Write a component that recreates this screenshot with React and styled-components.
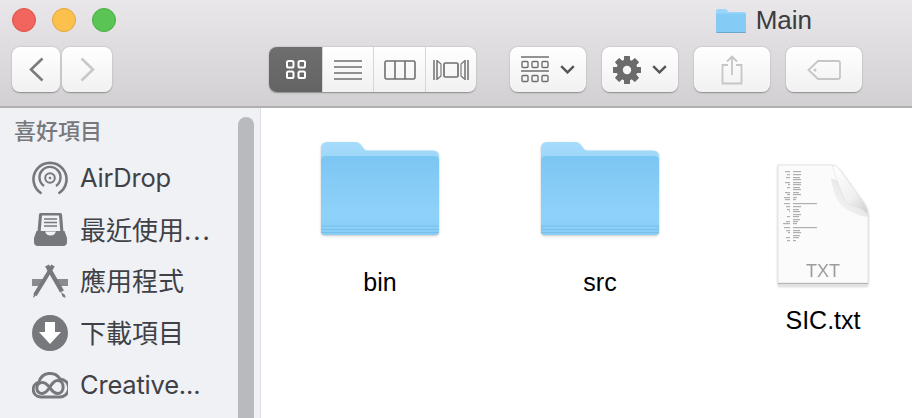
import React from 'react';
import styled, { createGlobalStyle } from 'styled-components';

const Global = createGlobalStyle`
  html, body { margin: 0; padding: 0; background: #fff; }
  body { width: 912px; height: 418px; overflow: hidden; }
`;

const Chev = ({ color = '#555' }) => (
  <svg width="15" height="9" viewBox="0 0 15 9" fill="none">
    <path d="M1.2 1.2 7.5 7.4 13.8 1.2" stroke={color} strokeWidth="2.4" />
  </svg>
);

const GridIcon = () => (
  <svg width="20" height="19" viewBox="0 0 20 19" fill="none" stroke="#fff" strokeWidth="2">
    <rect x="1" y="1" width="6.5" height="6.5" rx="1.6" />
    <rect x="12.5" y="1" width="6.5" height="6.5" rx="1.6" />
    <rect x="1" y="11.5" width="6.5" height="6.5" rx="1.6" />
    <rect x="12.5" y="11.5" width="6.5" height="6.5" rx="1.6" />
  </svg>
);

const ListIcon = () => (
  <svg width="28" height="20" viewBox="0 0 28 20" fill="none" stroke="#6f6f6f" strokeWidth="1.4">
    <path d="M0 1h28M0 7h28M0 13h28M0 19h28" />
  </svg>
);

const ColumnsIcon = () => (
  <svg width="32" height="20" viewBox="0 0 32 20" fill="none" stroke="#6f6f6f" strokeWidth="1.6">
    <rect x="1" y="1" width="30" height="18" rx="1.6" />
    <path d="M11 1v18M21 1v18" />
  </svg>
);

const CoverIcon = () => (
  <svg width="36" height="22" viewBox="0 0 36 22" fill="none" stroke="#6f6f6f" strokeWidth="1.5">
    <rect x="11" y="4" width="14" height="14" rx="1.4" strokeWidth="1.7" />
    <path d="M1 1v20M4 1v20M32 1v20M35 1v20" />
    <path d="M4.5 2 8 5v12l-3.500 3M31.500 2 28 5v12l3.500 3" strokeWidth="1.1" />
  </svg>
);

const ArrangeIcon = () => (
  <svg width="28" height="27" viewBox="0 0 28 27" fill="none" stroke="#6f6f6f" strokeWidth="1.4">
    <path d="M0 1h28M0 15h28" strokeWidth="1.5" />
    <rect x="1" y="5.500" width="6" height="6" rx="1" />
    <rect x="11" y="5.500" width="6" height="6" rx="1" />
    <rect x="21" y="5.500" width="6" height="6" rx="1" />
    <rect x="1" y="19.500" width="6" height="6" rx="1" />
    <rect x="11" y="19.500" width="6" height="6" rx="1" />
    <rect x="21" y="19.500" width="6" height="6" rx="1" />
  </svg>
);

const gearTeeth = [0, 45, 90, 135, 180, 225, 270, 315];
const GearIcon = () => (
  <svg width="28" height="28" viewBox="0 0 28 28">
    {gearTeeth.map((a) => (
      <rect key={a} x="11" y="0" width="6" height="28" rx="1" fill="#6b6b6b" transform={`rotate(${a} 14 14)`} />
    ))}
    <circle cx="14" cy="14" r="10.500" fill="#6b6b6b" />
    <circle cx="14" cy="14" r="4.200" fill="#f6f6f6" />
  </svg>
);

const ShareIcon = () => (
  <svg width="22" height="30" viewBox="0 0 22 30" fill="none" stroke="#c6c6c6" strokeWidth="1.8">
    <path d="M7 10H1.500v18.500h19V10H15" />
    <path d="M11 20V1.500M6 6.500 11 1.500 16 6.500" />
  </svg>
);

const TagIcon = () => (
  <svg width="34" height="20" viewBox="0 0 34 20" fill="none" stroke="#c6c6c6" strokeWidth="1.8">
    <path d="M11 1h20a2 2 0 0 1 2 2v14a2 2 0 0 1-2 2H11L1.500 10z" />
    <circle cx="8" cy="10" r="1.500" fill="#c6c6c6" stroke="none" />
  </svg>
);

const AirDropIcon = () => (
  <svg width="36" height="34" viewBox="0 0 36 34" fill="none" stroke="#77787b">
    <path d="M9.500 32.500a16.500 16.500 0 1 1 17 0" strokeWidth="2.600" />
    <path d="M12 25a10.500 10.500 0 1 1 12 0" strokeWidth="2.400" />
    <circle cx="18" cy="17" r="4.800" strokeWidth="2" />
    <circle cx="18" cy="17" r="1.300" fill="#77787b" stroke="none" />
  </svg>
);

const TrayIcon = () => (
  <svg width="33" height="33" viewBox="0 0 33 33">
    <path d="M5 1.500Q5 0 6.500 0h20Q28 0 28 1.500L29.500 19h-26z" fill="#77787b" />
    <path d="M8 2.500h17l1.300 16H6.700z" fill="#eff1f5" />
    <path d="M10 6h13M10 9.500h13M10 13h13" stroke="#77787b" strokeWidth="1.500" />
    <path d="M2.500 18h8.500q1 4.500 5.500 4.500T22 18h8.500L33 25v4q0 4-4 4H4q-4 0-4-4v-4z" fill="#77787b" />
  </svg>
);

const AppsIcon = () => (
  <svg width="36" height="34" viewBox="0 0 36 34">
    <path d="M0 15h12l-3.500 7H0zM24 15h12v7h-8.500z" fill="#8a8b8e" />
    <path d="M21 1.500 11 18 3 31" stroke="#77787b" strokeWidth="4" fill="none" />
    <path d="M15 1.500 30 27.500" stroke="#77787b" strokeWidth="4.500" fill="none" />
    <path d="M2 30 1 34l3-2.500zM29 28l4 3 .5 3-3-1.500z" fill="#77787b" />
  </svg>
);

const DownloadIcon = () => (
  <svg width="36" height="36" viewBox="0 0 36 36">
    <circle cx="18" cy="18" r="18" fill="#77787b" />
    <path d="M13 7h10v10h6L18 29 7 17h6z" fill="#fff" />
  </svg>
);

const CloudIcon = () => (
  <svg width="36" height="28" viewBox="0 0 36 28" fill="none" stroke="#77787b" strokeWidth="3">
    <path d="M8.500 26a7.500 7.500 0 0 1-1.500-14.800A11.500 11.500 0 0 1 28 8a9 9 0 0 1-.5 18z" />
    <path d="M10 22.500c-7 0-7-11 .5-11 7 0 8 11 15 11 7.500 0 7.500-13 0-13-7.500 0-7.500 13-15.500 13z" />
  </svg>
);

const Folder = () => (
  <svg width="119" height="96" viewBox="0 0 119 96">
    <defs>
      <linearGradient id="fBack" x1="0" y1="0" x2="0" y2="1">
        <stop offset="0" stopColor="#a6dcfb" />
        <stop offset="1" stopColor="#97d3f8" />
      </linearGradient>
      <linearGradient id="fFront" x1="0" y1="0" x2="0" y2="1">
        <stop offset="0" stopColor="#7cc6f3" />
        <stop offset="0.75" stopColor="#8fd2f9" />
        <stop offset="0.85" stopColor="#8ad0f7" />
        <stop offset="1" stopColor="#88cdf5" />
      </linearGradient>
    </defs>
    <path d="M0 7q0-6 6-6h28q4 0 6 3l3 4q1.500 1.500 4 1.500h65q6 0 6 6V30H0z" fill="url(#fBack)" />
    <path d="M0 20q0-5 5-5h108q5 0 5 5v70q0 4-4 4H4q-4 0-4-4z" fill="url(#fFront)" />
    <path d="M0 85h118M0 88.500h118M0 91.500h118" stroke="#70b8e6" strokeWidth="1" opacity="0.7" />
  </svg>
);

const MiniFolder = () => (
  <svg width="30" height="24" viewBox="0 0 30 24">
    <path d="M0 2q0-2 2-2h7q1.500 0 2.500 1.500L13 3h15q2 0 2 2v6H0z" fill="#9ad6fa" />
    <path d="M0 6q0-1.500 1.500-1.500h27Q30 4.500 30 6v16.500q0 1.500-1.500 1.500h-27Q0 24 0 22.500z" fill="#84cbf6" />
    <path d="M.5 23.500h29" stroke="#6ba6cc" strokeWidth="1" />
  </svg>
);

// tiny print on the document preview: [y, width of left column, width of right column]
const printRows = [
  [7, 5, 8], [10, 3, 8], [13, 4, 7], [15, 0, 8], [18, 5, 8], [20, 2, 8], [23, 3, 7], [25, 0, 8],
  [28, 5, 6], [30, 3, 8], [33, 6, 4], [35, 5, 3], [39, 6, 24], [42, 4, 8], [45, 3, 6], [47, 1, 7],
  [50, 0, 8], [52, 3, 6], [55, 0, 7], [57, 4, 5], [59, 7, 4], [63, 6, 24], [66, 4, 7], [68, 2, 8],
  [71, 0, 7], [73, 4, 6], [76, 3, 3],
];

const TextFile = () => (
  <svg width="96" height="124" viewBox="0 0 96 124">
    <defs>
      <linearGradient id="fold" x1="0" y1="0" x2="1" y2="1">
        <stop offset="0" stopColor="#ffffff" />
        <stop offset="0.6" stopColor="#f0f0f0" />
        <stop offset="1" stopColor="#cdcdcd" />
      </linearGradient>
      <linearGradient id="foldShade" x1="1" y1="0" x2="0" y2="1">
        <stop offset="0.3" stopColor="#d8d8d8" />
        <stop offset="1" stopColor="#fbfbfb" />
      </linearGradient>
    </defs>
    <path d="M3 1h54q4 0 8 5l24 33q4 6 4 12v68H3z" fill="#fbfbfb" stroke="#e2e2e2" strokeWidth="0.8" />
    <path d="M56 14q3 22 13 30 10 7 24 9v-2L70 20z" fill="url(#foldShade)" opacity="0.7" />
    <path d="M3 119.500h90" stroke="#b5b5b5" strokeWidth="1.200" />
    <path d="M3 121h90" stroke="#e6e6e6" strokeWidth="1.500" />
    <path d="M57 1q4 0 8 5l24 33q4 6 4 12-4-6-12-8-8-1.500-12-9-4-8-12-33z" fill="url(#fold)" stroke="#e0e0e0" strokeWidth="0.6" />
    {printRows.map(([y, l, r]) => (
      <g key={y} fill="#b0b0b0">
        {l > 0 && <rect x={15 - l} y={y} width={l} height="1.200" />}
        {r > 0 && <rect x="18" y={y} width={r} height="1.200" />}
      </g>
    ))}
    <text x="48" y="113" textAnchor="middle" fontFamily="'Liberation Sans', sans-serif" fontSize="18" fill="#9c9c9c">TXT</text>
  </svg>
);

const places = [
  { icon: <AirDropIcon />, label: 'AirDrop' },
  { icon: <TrayIcon />, label: '最近使用', cjk: true, more: true },
  { icon: <AppsIcon />, label: '應用程式', cjk: true },
  { icon: <DownloadIcon />, label: '下載項目', cjk: true },
  { icon: <CloudIcon />, label: 'Creative...' },
];

export default function App() {
  return (
    <Window>
      <Global />
      <Toolbar>
        <TitleRow>
          <Lights>
            <Light $bg="#f2655e" $edge="#dd5049" />
            <Light $bg="#fcc14c" $edge="#e3a53a" />
            <Light $bg="#5ac455" $edge="#49ad44" />
          </Lights>
          <Title>
            <MiniFolder />
            <span>Main</span>
          </Title>
        </TitleRow>
        <ToolRow>
          <NavPair>
            <ToolButton $w={48}>
              <svg width="15" height="25" viewBox="0 0 15 25" fill="none">
                <path d="M13.500 1.500 2 12.500 13.500 23.500" stroke="#7b7b7b" strokeWidth="2.600" />
              </svg>
            </ToolButton>
            <ToolButton $w={50}>
              <svg width="15" height="25" viewBox="0 0 15 25" fill="none">
                <path d="M1.500 1.500 13 12.500 1.500 23.500" stroke="#c8c8c8" strokeWidth="2.600" />
              </svg>
            </ToolButton>
          </NavPair>
          <ViewGroup>
            <ViewCell $w={53} $active><GridIcon /></ViewCell>
            <ViewCell $w={51}><ListIcon /></ViewCell>
            <ViewCell $w={52}><ColumnsIcon /></ViewCell>
            <ViewCell $w={51}><CoverIcon /></ViewCell>
          </ViewGroup>
          <ToolButton $w={76} $ml={18} $gap={11}><ArrangeIcon /><Chev /></ToolButton>
          <ToolButton $w={76} $gap={11}><GearIcon /><Chev /></ToolButton>
          <ToolButton $w={76}><ShareIcon /></ToolButton>
          <ToolButton $w={76}><TagIcon /></ToolButton>
        </ToolRow>
      </Toolbar>
      <Body>
        <Sidebar>
          <Places>
            <Heading>喜好項目</Heading>
            {places.map((p) => (
              <Place key={p.label}>
                <PlaceIcon>{p.icon}</PlaceIcon>
                <PlaceLabel $cjk={p.cjk}>
                  {p.label}
                  {p.more && <Dots>...</Dots>}
                </PlaceLabel>
              </Place>
            ))}
          </Places>
          <ScrollThumb />
        </Sidebar>
        <Files>
          <FileItem $w={220}><IconBox $h={129} $pad={33}><Folder /></IconBox><FileName $top={30}>bin</FileName></FileItem>
          <FileItem $w={220}><IconBox $h={129} $pad={33}><Folder /></IconBox><FileName $top={30}>src</FileName></FileItem>
          <FileItem $w={226}><IconBox $h={178} $pad={56}><TextFile /></IconBox><FileName $top={19}>SIC.txt</FileName></FileItem>
        </Files>
      </Body>
    </Window>
  );
}

const Window = styled.div`
  width: 912px;
  height: 418px;
  display: flex;
  flex-direction: column;
  overflow: hidden;
  background: #fff;
`;
const Toolbar = styled.header`
  height: 108px;
  box-sizing: border-box;
  flex: none;
  display: flex;
  flex-direction: column;
  background: linear-gradient(#e9e7e9, #d2d0d2);
  border-bottom: 2px solid #b1afb1;
`;
const TitleRow = styled.div`
  height: 47px;
  display: flex;
  align-items: flex-start;
  justify-content: space-between;
  padding: 8px 100px 0 12px;
  box-sizing: border-box;
`;
const Lights = styled.div`
  display: flex;
  gap: 16px;
`;
const Light = styled.span`
  width: 24px;
  height: 24px;
  box-sizing: border-box;
  border-radius: 50%;
  background: ${(p) => p.$bg};
  border: 1px solid ${(p) => p.$edge};
`;
const Title = styled.div`
  display: flex;
  align-items: center;
  gap: 10px;
  height: 25px;
  font: 26px "Liberation Sans", sans-serif;
  color: #3c3c3e;
`;
const ToolRow = styled.div`
  display: flex;
  gap: 16px;
  padding-left: 12px;
`;
const NavPair = styled.div`
  display: flex;
  gap: 2px;
  margin-right: 141px;
`;
const ToolButton = styled.div`
  width: ${(p) => p.$w}px;
  height: 45px;
  margin-left: ${(p) => p.$ml || 0}px;
  box-sizing: border-box;
  display: flex;
  align-items: center;
  justify-content: center;
  gap: ${(p) => p.$gap || 0}px;
  background: linear-gradient(#ffffff, #f1f1f1);
  border-radius: 8px;
  box-shadow: 0 0.5px 1.5px rgba(0, 0, 0, 0.35);
`;
const ViewGroup = styled.div`
  display: flex;
  height: 45px;
  border-radius: 8px;
  overflow: hidden;
  box-shadow: 0 0.5px 1.5px rgba(0, 0, 0, 0.35);
`;
const ViewCell = styled.div`
  width: ${(p) => p.$w}px;
  box-sizing: border-box;
  display: flex;
  align-items: center;
  justify-content: center;
  background: ${(p) => (p.$active ? 'linear-gradient(#6e6e6e, #646464)' : 'linear-gradient(#ffffff, #f1f1f1)')};
  & + & {
    border-left: 1px solid #d6d6d6;
  }
`;
const Body = styled.div`
  flex: 1;
  display: flex;
  min-height: 0;
`;
const Sidebar = styled.aside`
  width: 261px;
  flex: none;
  box-sizing: border-box;
  display: flex;
  background: #eff1f5;
  border-right: 1px solid #dfe0e3;
`;
const Places = styled.nav`
  flex: 1;
  min-width: 0;
`;
const Heading = styled.h2`
  margin: 0;
  height: 44px;
  padding: 7px 0 0 14px;
  box-sizing: border-box;
  font: 500 22px/28px "Noto Sans CJK TC", sans-serif;
  color: #77787c;
`;
const Place = styled.div`
  height: 51.750px;
  display: flex;
  align-items: center;
  padding-left: 32px;
  gap: 12px;
  color: #3f4146;
`;
const PlaceLabel = styled.span`
  font-family: ${(p) => (p.$cjk ? '"Noto Sans CJK TC"' : 'Inter')}, sans-serif;
  font-size: ${(p) => (p.$cjk ? 26 : 25.5)}px;
  line-height: 32px;
  letter-spacing: ${(p) => (p.$cjk ? 0 : -0.2)}px;
  padding-bottom: ${(p) => (p.$cjk ? 2 : 0)}px;
`;
const Dots = styled.span`
  letter-spacing: 2px;
`;
const PlaceIcon = styled.span`
  width: 36px;
  display: flex;
  justify-content: center;
`;
const ScrollThumb = styled.div`
  width: 16px;
  margin: 9px 6px 0 0;
  background: #b9babd;
  border-radius: 8px 8px 0 0;
`;
const Files = styled.main`
  flex: 1;
  display: flex;
  align-items: flex-start;
  padding-left: 9px;
`;
const FileItem = styled.div`
  width: ${(p) => p.$w}px;
  display: flex;
  flex-direction: column;
  align-items: center;
`;
const IconBox = styled.div`
  height: ${(p) => p.$h}px;
  padding-top: ${(p) => p.$pad}px;
  box-sizing: border-box;
  width: 100%;
  display: flex;
  justify-content: center;
  svg {
    flex: none;
    filter: drop-shadow(0 1px 1px rgba(0, 0, 0, 0.22));
  }
`;
const FileName = styled.div`
  margin-top: ${(p) => p.$top}px;
  font: 25px/30px "Liberation Sans", sans-serif;
  color: #000;
`;
